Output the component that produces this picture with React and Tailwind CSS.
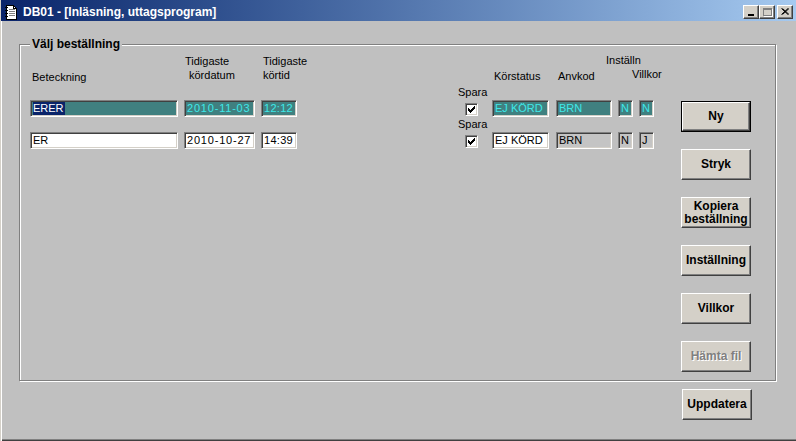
import React from 'react';

const font = { fontFamily: '"Liberation Sans", Arial, sans-serif' };

const sunken =
  'border border-t-[#808080] border-l-[#808080] border-b-white border-r-white shadow-[inset_1px_1px_0_#404040,inset_-1px_-1px_0_#d4d0c8]';

function Field({ w, value, variant = 'white', selected = false, track = '' }) {
  const bg =
    variant === 'teal'
      ? 'bg-[#408080] text-[#3ee8e8]'
      : variant === 'disabled'
      ? 'bg-[#c4c4c4] text-black'
      : 'bg-white text-black';
  return (
    <div
      className={`${sunken} ${bg} ${track} h-[17px] flex items-center pl-[2px] text-[11px] leading-none overflow-hidden whitespace-nowrap`}
      style={{ width: w }}
    >
      {selected ? <span className="bg-[#0a246a] text-white pr-[1px] leading-[13px]">{value}</span> : value}
    </div>
  );
}

function Check() {
  return (
    <div className={`${sunken} w-[13px] h-[13px] bg-white flex items-center justify-center`}>
      <svg width="9" height="9" viewBox="0 0 9 9" shapeRendering="crispEdges">
        <rect x="1" y="3" width="1" height="3" fill="black" />
        <rect x="2" y="4" width="1" height="3" fill="black" />
        <rect x="3" y="5" width="1" height="3" fill="black" />
        <rect x="4" y="4" width="1" height="3" fill="black" />
        <rect x="5" y="3" width="1" height="3" fill="black" />
        <rect x="6" y="2" width="1" height="3" fill="black" />
        <rect x="7" y="1" width="1" height="3" fill="black" />
      </svg>
    </div>
  );
}

function Btn({ children, isDefault = false, disabled = false }) {
  const face = (
    <div className="w-full h-full bg-[#d4d0c8] border border-t-white border-l-white border-b-[#404040] border-r-[#404040] shadow-[inset_-1px_-1px_0_#808080] flex items-center justify-center text-center">
      <span
        className={`font-bold text-[12px] leading-[13px] ${
          disabled ? 'text-[#808080] [text-shadow:1px_1px_0_white]' : 'text-black'
        }`}
      >
        {children}
      </span>
    </div>
  );
  return (
    <div className={`w-[70px] h-[31px] ${isDefault ? 'border border-black' : ''}`}>{face}</div>
  );
}

function Spara({ children }) {
  return (
    <div className="w-[31px] h-full flex flex-col">
      <div className="mt-[1px] leading-[13px] text-[11px]">Spara</div>
      <div className="mt-[4px] ml-[7px]">{children}</div>
    </div>
  );
}

function Row({ data }) {
  const v = data.teal ? 'teal' : 'white';
  return (
    <div className="h-[32px] flex items-end">
      <Field w={148} value={data.bet} variant={v} selected={data.teal} />
      <div className="ml-[6px]">
        <Field w={71} value={data.date} variant={v} track="tracking-[0.8px]" />
      </div>
      <div className="ml-[6px]">
        <Field w={36} value={data.time} variant={v} track="tracking-[0.3px]" />
      </div>
      <div className="ml-[161px] h-full">
        <Spara>
          <Check />
        </Spara>
      </div>
      <div className="ml-[3px]">
        <Field w={57} value="EJ KÖRD" variant={v} />
      </div>
      <div className="ml-[7px]">
        <Field w={56} value="BRN" variant={data.teal ? 'teal' : 'disabled'} />
      </div>
      <div className="ml-[6px]">
        <Field w={15} value="N" variant={data.teal ? 'teal' : 'disabled'} />
      </div>
      <div className="ml-[6px]">
        <Field w={15} value={data.villkor} variant={data.teal ? 'teal' : 'disabled'} />
      </div>
    </div>
  );
}

function TitleButton({ children }) {
  return (
    <div className="w-[16px] h-[14px] bg-[#d4d0c8] border border-t-white border-l-white border-b-[#404040] border-r-[#404040] shadow-[inset_-1px_-1px_0_#808080] flex items-center justify-center">
      {children}
    </div>
  );
}

export default function App() {
  const rows = [
    { bet: 'ERER', date: '2010-11-03', time: '12:12', villkor: 'N', teal: true },
    { bet: 'ER', date: '2010-10-27', time: '14:39', villkor: 'J', teal: false },
  ];

  return (
    <div
      className="w-[796px] h-[441px] bg-[#c0c0c0] overflow-hidden flex flex-col border-l border-l-[#d4d0c8] shadow-[inset_1px_0_0_white,inset_0_-1px_0_#404040,inset_0_-2px_0_#808080] text-black"
      style={font}
    >
      {/* title bar */}
      <div className="h-[21px] bg-gradient-to-r from-[#0a246a] to-[#a6caf0] flex items-center pl-[2px] pr-[3px] pt-[2px]">
        <svg width="16" height="16" viewBox="0 0 16 16" className="mr-[4px]" shapeRendering="crispEdges">
          <path d="M3 1 H10 L13 4 V15 H3 Z" fill="white" stroke="black" strokeWidth="1" />
          <path d="M10 1 V4 H13" fill="none" stroke="black" />
          <rect x="2" y="3" width="3" height="1" fill="black" />
          <rect x="2" y="6" width="3" height="1" fill="black" />
          <rect x="2" y="9" width="3" height="1" fill="black" />
          <rect x="2" y="12" width="3" height="1" fill="black" />
          <rect x="6" y="5" width="6" height="1" fill="#808080" />
          <rect x="6" y="7" width="6" height="1" fill="#808080" />
          <rect x="6" y="9" width="6" height="1" fill="#808080" />
          <rect x="6" y="11" width="6" height="1" fill="#808080" />
        </svg>
        <span className="text-white font-bold text-[12px] leading-none">DB01 - [Inläsning, uttagsprogram]</span>
        <div className="ml-auto flex items-center">
          <TitleButton>
            <div className="w-[6px] h-[2px] bg-black mt-[6px] -ml-[1px]" />
          </TitleButton>
          <TitleButton>
            <div className="w-[9px] h-[8px] border border-[#808080] border-t-2 shadow-[1px_1px_0_white]" />
          </TitleButton>
          <div className="ml-[2px]">
            <TitleButton>
              <svg width="8" height="7" viewBox="0 0 8 7">
                <path d="M0.5 0.5 L7 6.5 M1.5 0.5 L8 6.5 M7 0.5 L0.5 6.5 M8 0.5 L1.5 6.5" stroke="black" strokeWidth="1" />
              </svg>
            </TitleButton>
          </div>
        </div>
      </div>

      {/* body */}
      <div className="pt-[23px] pl-[18px]">
        <div className="relative w-[757px] h-[337px] border border-[#808080] shadow-[inset_1px_1px_0_white,1px_1px_0_white] flex items-start">
          <div className="absolute left-[10px] -top-[8px] bg-[#c0c0c0] px-[2px] font-bold text-[12px] leading-[14px]">
            Välj beställning
          </div>

          {/* fields */}
          <div className="w-[661px] pt-[9px] pl-[10px] text-[11px]">
            <div className="h-[31px] flex items-end">
              <div className="w-[154px] pl-[2px] leading-[14px] mb-[1px]">Beteckning</div>
              <div className="w-[77px] leading-[14px] mb-[3px] pl-[1px]">
                <div>Tidigaste</div>
                <div className="pl-[4px]">kördatum</div>
              </div>
              <div className="w-[233px] pl-[2px] leading-[14px] mb-[3px]">
                <div>Tidigaste</div>
                <div>körtid</div>
              </div>
              <div className="w-[64px] leading-[14px] mb-[2px]">Körstatus</div>
              <div className="w-[48px] leading-[14px] mb-[2px]">Anvkod</div>
              <div className="leading-[14px] mb-[4px]">
                <div>Inställn</div>
                <div className="pl-[26px]">Villkor</div>
              </div>
            </div>
            {rows.map((r, i) => (
              <Row key={i} data={r} />
            ))}
          </div>

          {/* buttons */}
          <div className="mt-[56px] flex flex-col gap-[17px]">
            <Btn isDefault>Ny</Btn>
            <Btn>Stryk</Btn>
            <Btn>
              Kopiera
              <br />
              beställning
            </Btn>
            <Btn>Inställning</Btn>
            <Btn>Villkor</Btn>
            <Btn disabled>Hämta fil</Btn>
          </div>
        </div>
        <div className="mt-[8px] ml-[663px]">
          <Btn>Uppdatera</Btn>
        </div>
      </div>
    </div>
  );
}
